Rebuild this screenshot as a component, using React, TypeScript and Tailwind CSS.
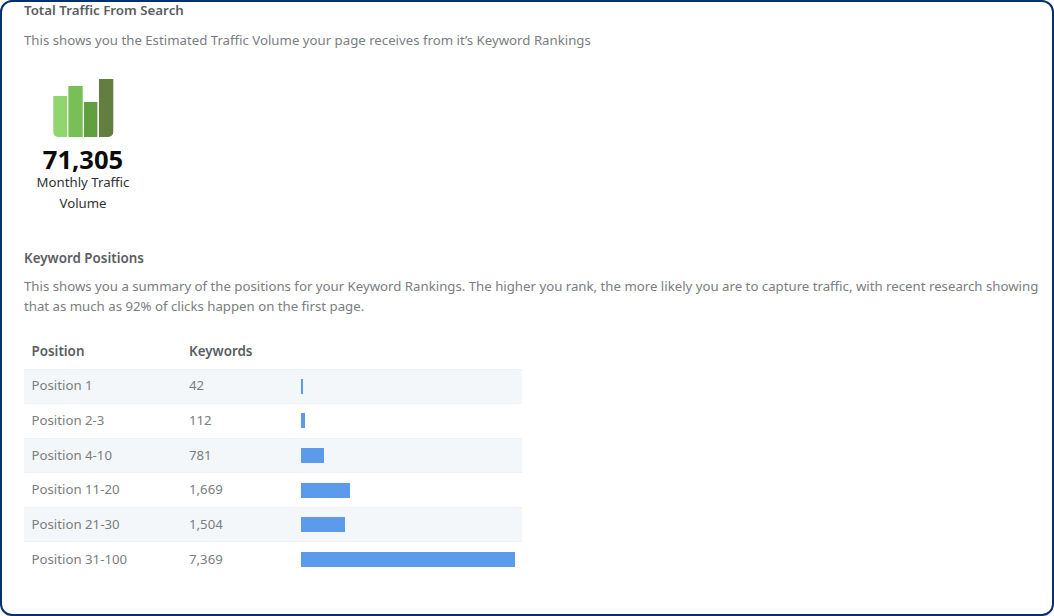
const ROWS = [
  { label: "Position 1", count: "42", width: 2 },
  { label: "Position 2-3", count: "112", width: 4 },
  { label: "Position 4-10", count: "781", width: 23 },
  { label: "Position 11-20", count: "1,669", width: 48.5 },
  { label: "Position 21-30", count: "1,504", width: 44 },
  { label: "Position 31-100", count: "7,369", width: 214 },
];

function TrafficIcon() {
  return (
    <svg width="62" height="60" viewBox="0 0 62 60" className="block">
      <path d="M1.3 18h13.7v41H6.3a5 5 0 0 1-5-5z" fill="#90d66f" />
      <rect x="16.4" y="8" width="14.3" height="51" fill="#79bf57" />
      <rect x="32" y="24" width="13.4" height="35" fill="#629f40" />
      <path d="M47 1h14.3v53a5 5 0 0 1-5 5H47z" fill="#637f40" />
    </svg>
  );
}

export default function App() {
  return (
    <div className="w-[1054px] h-[616px] bg-white border-2 border-[#03306f] rounded-[12px] overflow-hidden font-['Noto_Sans',sans-serif] text-[#7a7d81] text-[13.22px]">
      <div className="pl-[22px] pr-[12px]">
        <h3 className="text-[13.3px] font-semibold leading-[18px] text-[#5a5d61] mt-[-1px]">Total Traffic From Search</h3>
        <p className="leading-[22px] mt-[10px]">This shows you the Estimated Traffic Volume your page receives from it’s Keyword Rankings</p>

        <div className="w-[118px] flex flex-col items-center mt-[27px]">
          <TrafficIcon />
          <div className="text-[25.6px] font-bold leading-[24px] text-[#0b0b0b] mt-[10px]">71,305</div>
          <div className="text-center leading-[21px] text-[#2f3235]">Monthly Traffic Volume</div>
        </div>

        <h3 className="text-[13.4px] font-semibold leading-[18px] text-[#5a5d61] mt-[35px]">Keyword Positions</h3>
        <p className="leading-[20px] mt-[8.5px]">This shows you a summary of the positions for your Keyword Rankings. The higher you rank, the more likely you are to capture traffic, with recent research showing that as much as 92% of clicks happen on the first page.</p>

        <div className="w-[498px] mt-[19px]">
          <div className="flex h-[35px] items-center px-[7.5px] text-[13.4px] font-semibold text-[#5a5d61] border-b border-[#eef1f5]">
            <div className="w-[157.5px]">Position</div>
            <div>Keywords</div>
          </div>
          {ROWS.map((row) => (
            <div key={row.label} className="flex h-[34.6px] items-center px-[7.5px] border-b border-[#eef1f5] last:border-b-0 even:bg-[#f4f7fa]">
              <div className="w-[157.5px] shrink-0">{row.label}</div>
              <div className="w-[112px] shrink-0">{row.count}</div>
              <div className="h-[15px] bg-[#5c9bec]" style={{ width: row.width }} />
            </div>
          ))}
        </div>
      </div>
    </div>
  );
}
